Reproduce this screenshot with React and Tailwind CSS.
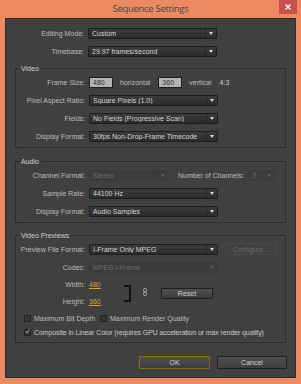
import React from "react"

const Arrow = ({ disabled }) => (
  <span
    className={`w-0 h-0 border-x-[2.5px] border-t-[3px] border-x-transparent ${
      disabled ? "border-t-[#5e5e5e]" : "border-t-[#d8d8d8]"
    }`}
  />
)

const Select = ({ value, width = "w-[129px]", disabled }) => (
  <div
    className={`${width} h-[11px] flex items-center border rounded-[1px] ${
      disabled
        ? "border-[#3a3a3a] bg-[#3c3c3c] text-[#6b6b6b]"
        : "border-[#1d1d1d] bg-gradient-to-b from-[#3b3b3b] to-[#2c2c2c] text-[#d2d2d2]"
    }`}
  >
    <span className="flex-1 pl-[3px] leading-none whitespace-nowrap overflow-hidden">{value}</span>
    <span
      className={`w-[11px] h-full flex items-center justify-center border-l ${
        disabled ? "border-[#383838]" : "border-[#262626]"
      }`}
    >
      <Arrow disabled={disabled} />
    </span>
  </div>
)

const Row = ({ label, labelWidth = "w-[73px]", h = "h-[18px]", children }) => (
  <div className={`${h} flex items-center`}>
    <span className={`${labelWidth} pr-[4px] text-right text-[#bcbcbc] whitespace-nowrap`}>{label}</span>
    {children}
  </div>
)

const Group = ({ title, className = "", children }) => (
  <div className={`relative mx-[9px] border border-[#2b2b2b] rounded-[2px] shadow-[inset_0_0_0_1px_#444444] ${className}`}>
    <span className="absolute -top-[5px] left-[3px] px-[2px] bg-[#404040] text-[#cfcfcf] leading-[9px]">
      {title}
    </span>
    {children}
  </div>
)

const Checkbox = ({ checked }) => (
  <span className="w-[7px] h-[7px] border border-[#222] bg-[#353535] flex items-center justify-center">
    {checked && (
      <svg width="7" height="7" viewBox="0 0 7 7" className="-mt-[1px]">
        <path d="M0.8 3.6 L2.6 5.6 L6.4 0.8" stroke="#d0d0d0" strokeWidth="1.1" fill="none" />
      </svg>
    )}
  </span>
)

const Button = ({ children, className = "", disabled }) => (
  <div
    className={`flex items-center justify-center border rounded-[1px] ${
      disabled
        ? "border-[#4a4a4a] bg-[#414141] text-[#6b6b6b]"
        : "border-[#1e1e1e] bg-gradient-to-b from-[#4f4f4f] to-[#3e3e3e] text-[#cfcfcf]"
    } ${className}`}
  >
    {children}
  </div>
)

export default function App() {
  return (
    <div className="w-[301px] h-[384px] bg-[#ec8b62] flex flex-col font-['Liberation_Sans',Arial,sans-serif] text-[7px] leading-none">
      <div className="relative h-[18px] flex items-center justify-center">
        <span className="text-[9.5px] tracking-[-0.3px] text-[#474747] font-['Open_Sans',sans-serif]">
          Sequence Settings
        </span>
        <div className="absolute right-[4px] top-0 w-[18px] h-[14px] bg-[#c7504c] flex items-center justify-center">
          <svg width="6" height="6" viewBox="0 0 6 6">
            <path d="M0.5 0.5 L5.5 5.5 M5.5 0.5 L0.5 5.5" stroke="#fff" strokeWidth="1.4" />
          </svg>
        </div>
      </div>

      <div className="mx-[5px] h-[360px] bg-[#404040] border border-[#2e2e2e] flex flex-col pt-[5px]">
        <Row label="Editing Mode:" labelWidth="w-[82px]">
          <Select value="Custom" />
        </Row>
        <Row label="Timebase:" labelWidth="w-[82px]">
          <Select value="29.97 frames/second" />
        </Row>

        <Group title="Video" className="mt-[8px] pt-[4px] pb-[2px]">
          <Row label="Frame Size:">
            <span className="w-[24px] h-[11px] bg-[#b3b3b3] border border-[#1e1e1e] text-[#2e2e2e] pl-[3px] flex items-center">480</span>
            <span className="ml-[7px] text-[#bcbcbc]">horizontal</span>
            <span className="ml-[8px] w-[24px] h-[11px] bg-[#b3b3b3] border border-[#1e1e1e] text-[#2e2e2e] pl-[3px] flex items-center">360</span>
            <span className="ml-[7px] text-[#bcbcbc]">vertical</span>
            <span className="ml-[8px] text-[#cfcfcf]">4:3</span>
          </Row>
          <Row label="Pixel Aspect Ratio:">
            <Select value="Square Pixels (1.0)" />
          </Row>
          <Row label="Fields:">
            <Select value="No Fields (Progressive Scan)" />
          </Row>
          <Row label="Display Format:">
            <Select value="30fps Non-Drop-Frame Timecode" />
          </Row>
        </Group>

        <Group title="Audio" className="mt-[13px] pt-[4px] pb-[2px]">
          <Row label="Channel Format:">
            <Select value="Stereo" width="w-[80px]" disabled />
            <span className="ml-[9px] text-[#bcbcbc]">Number of Channels:</span>
            <span className="ml-[4px]">
              <Select value="2" width="w-[27px]" disabled />
            </span>
          </Row>
          <Row label="Sample Rate:">
            <Select value="44100 Hz" />
          </Row>
          <Row label="Display Format:">
            <Select value="Audio Samples" />
          </Row>
        </Group>

        <Group title="Video Previews" className="mt-[12px] pt-[4px] pb-[3px]">
          <Row label="Preview File Format:">
            <Select value="I-Frame Only MPEG" />
            <Button disabled className="ml-[7px] w-[52px] h-[12px]">Configure...</Button>
          </Row>
          <Row label="Codec:">
            <Select value="MPEG I-Frame" disabled />
          </Row>
          <div className="flex items-center">
            <div className="w-[108px]">
              <Row label="Width:" h="h-[17px]">
                <span className="text-[#d9a62c] underline underline-offset-[1px]">480</span>
              </Row>
              <Row label="Height:" h="h-[17px]">
                <span className="text-[#d9a62c] underline underline-offset-[1px]">360</span>
              </Row>
            </div>
            <div className="w-[7px] h-[17px] border-y-2 border-r-2 border-[#111]" />
            <svg width="4" height="8" viewBox="0 0 4 8" className="ml-[12px] -mt-[3px]">
              <rect x="0.5" y="0.5" width="3" height="3.6" rx="1.5" stroke="#a8a8a8" strokeWidth="1" fill="none" />
              <rect x="0.5" y="3.9" width="3" height="3.6" rx="1.5" stroke="#a8a8a8" strokeWidth="1" fill="none" />
            </svg>
            <Button className="ml-[14px] w-[52px] h-[11px]">Reset</Button>
          </div>
          <div className="h-[14px] mt-[1px] pl-[8px] flex items-center text-[#bcbcbc]">
            <span className="w-[76px] flex items-center gap-[3px]">
              <Checkbox />
              <span>Maximum Bit Depth</span>
            </span>
            <span className="flex items-center gap-[3px]">
              <Checkbox />
              <span>Maximum Render Quality</span>
            </span>
          </div>
          <div className="h-[14px] pl-[8px] flex items-center gap-[3px] text-[#c8c8c8]">
            <Checkbox checked />
            <span className="whitespace-nowrap tracking-[-0.1px]">Composite in Linear Color (requires GPU acceleration or max render quality)</span>
          </div>
        </Group>

        <div className="mt-[13px] pr-[8px] flex justify-end gap-[7px]">
          <Button className="w-[71px] h-[13px] !border-[#8c6a1c]">OK</Button>
          <Button className="w-[70px] h-[13px]">Cancel</Button>
        </div>
      </div>
    </div>
  )
}
